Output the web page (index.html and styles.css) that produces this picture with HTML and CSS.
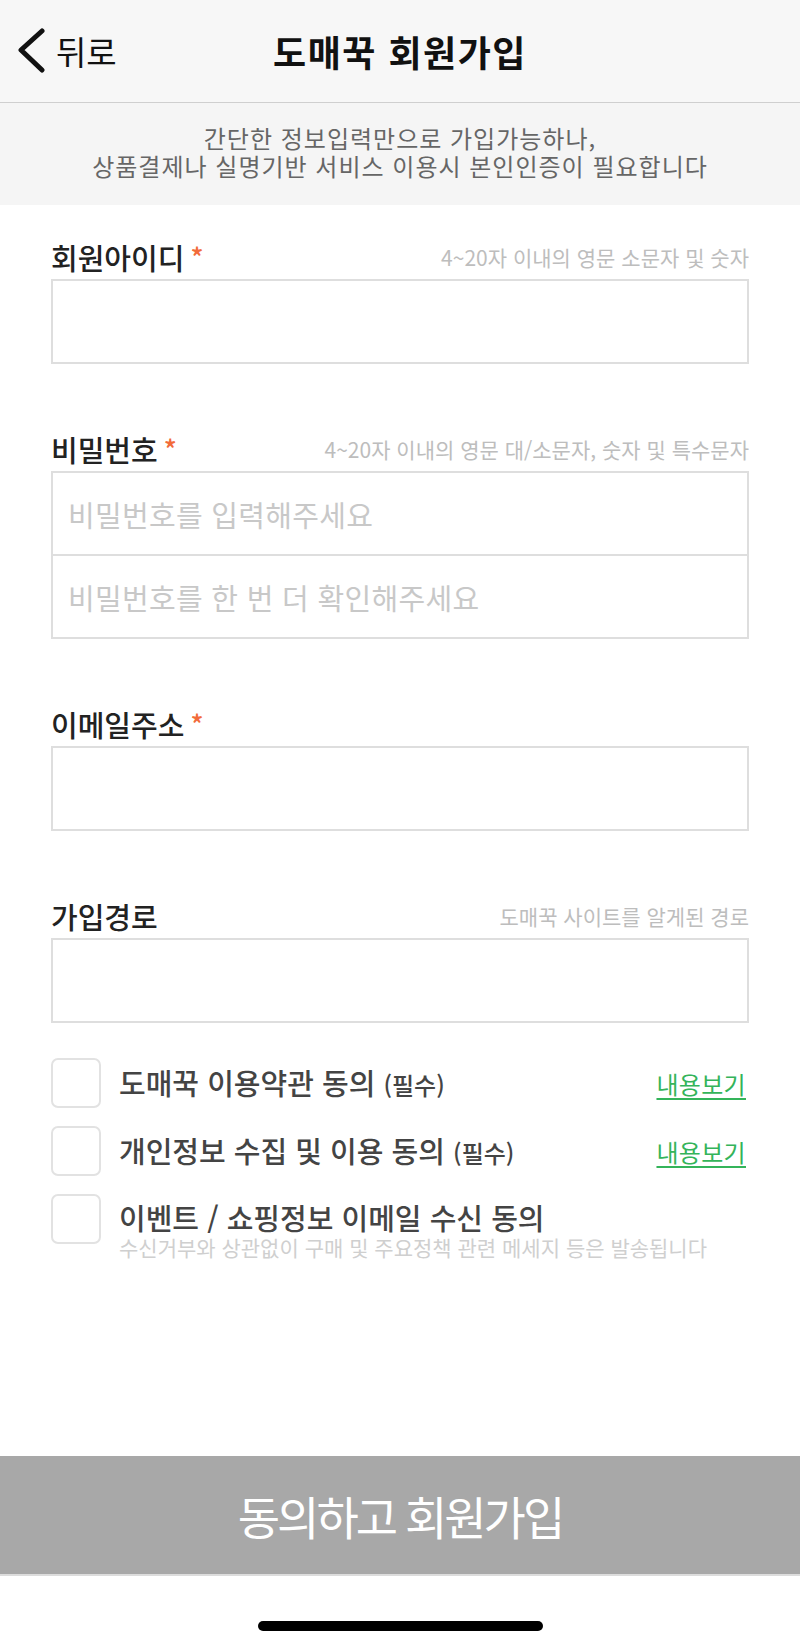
FILE: index.html
```html
<!DOCTYPE html>
<html lang="ko">
  <head>
    <meta charset="utf-8">
    <title>도매꾹 회원가입</title>
    <link rel="stylesheet" href="styles.css">
  </head>

  <body>
    <div class="page">
      <header class="topbar">
        <a class="back" href="#">
          <svg class="back-icon" width="30" height="46" viewBox="0 0 30 46">
            <polyline points="26,3 5,22 26,42" fill="none" stroke="#111" stroke-width="5" stroke-linecap="round" stroke-linejoin="round" />
          </svg>
          <span>뒤로</span>
        </a>
        <h1 class="title">도매꾹 회원가입</h1>
        <span></span>
      </header>

      <div class="notice">
        <p>간단한 정보입력만으로 가입가능하나,</p>
        <p>상품결제나 실명기반 서비스 이용시 본인인증이 필요합니다</p>
      </div>

      <form class="form">
        <div class="field">
          <div class="field-head">
            <label class="label">회원아이디<em class="req">*</em></label>
            <span class="hint">4~20자 이내의 영문 소문자 및 숫자</span>
          </div>
          <input class="input" type="text" />
        </div>

        <div class="field">
          <div class="field-head">
            <label class="label">비밀번호<em class="req">*</em></label>
            <span class="hint">4~20자 이내의 영문 대/소문자, 숫자 및 특수문자</span>
          </div>
          <input class="input" type="password" placeholder="비밀번호를 입력해주세요" />
          <input class="input input-joined" type="password" placeholder="비밀번호를 한 번 더 확인해주세요" />
        </div>

        <div class="field">
          <div class="field-head">
            <label class="label">이메일주소<em class="req">*</em></label>
          </div>
          <input class="input" type="email" />
        </div>

        <div class="field">
          <div class="field-head">
            <label class="label">가입경로</label>
            <span class="hint">도매꾹 사이트를 알게된 경로</span>
          </div>
          <input class="input" type="text" />
        </div>

        <ul class="agree-list">
          <li class="agree">
            <span class="check"></span>
            <span class="agree-text">도매꾹 이용약관 동의 <small>(필수)</small></span>
            <a class="more" href="#">내용보기</a>
          </li>
          <li class="agree">
            <span class="check"></span>
            <span class="agree-text">개인정보 수집 및 이용 동의 <small>(필수)</small></span>
            <a class="more" href="#">내용보기</a>
          </li>
          <li class="agree agree-top">
            <span class="check"></span>
            <div>
              <div class="agree-text">이벤트 / 쇼핑정보 이메일 수신 동의</div>
              <div class="agree-sub">수신거부와 상관없이 구매 및 주요정책 관련 메세지 등은 발송됩니다</div>
            </div>
          </li>
        </ul>
      </form>

      <footer class="footer">
        <button class="submit" type="button">동의하고 회원가입</button>
        <div class="home-bar"><span></span></div>
      </footer>
    </div>
  </body>
</html>
```

FILE: styles.css
```css
* {
  box-sizing: border-box;
}
body {
  margin: 0;
  font-family: "Noto Sans CJK KR", "Noto Sans", sans-serif;
  color: #222;
  background: #fff;
}
.page {
  min-height: 100vh;
  display: flex;
  flex-direction: column;
}

.topbar {
  height: 103px;
  background: #f7f7f7;
  border-bottom: 1px solid #cfcfcf;
  display: grid;
  grid-template-columns: 1fr auto 1fr;
  align-items: center;
}
.back {
  display: flex;
  align-items: center;
  gap: 10px;
  padding-left: 16px;
  color: #111;
  text-decoration: none;
  font-size: 33px;
}
.back-icon {
  display: block;
}
.title {
  margin: 0;
  font-size: 36px;
  font-weight: bold;
  color: #111;
  letter-spacing: 1.5px;
}

.notice {
  height: 102px;
  padding-top: 21px;
  background: #f5f5f5;
  text-align: center;
  font-size: 24px;
  color: #666;
  letter-spacing: 1px;
}
.notice p {
  margin: 0;
  height: 28px;
  line-height: 28px;
}

.form {
  padding: 33px 51px 0;
}
.field + .field {
  margin-top: 66px;
}
.field-head {
  height: 41px;
  padding-bottom: 4px;
  display: flex;
  justify-content: space-between;
  align-items: center;
}
.label {
  font-size: 29px;
  font-weight: 500;
  color: #222;
}
.req {
  font-style: normal;
  font-size: 27px;
  color: #f26b3a;
  margin-left: 6px;
  vertical-align: 2px;
}
.hint {
  font-size: 21px;
  color: #bdbdbd;
}
.input {
  display: block;
  width: 100%;
  height: 85px;
  margin: 0;
  border: 2px solid #dedede;
  border-radius: 0;
  padding: 0 15px;
  font-family: inherit;
  font-size: 29px;
  letter-spacing: 0.3px;
  color: #222;
  background: #fff;
  outline: none;
}
.input::placeholder {
  color: #c8c8c8;
}
.input-joined {
  margin-top: -2px;
}

.agree-list {
  list-style: none;
  margin: 35px 0 0;
  padding: 0;
}
.agree {
  display: flex;
  align-items: center;
  gap: 18px;
}
.agree + .agree {
  margin-top: 18px;
}
.agree-top {
  align-items: flex-start;
}
.check {
  flex: none;
  width: 50px;
  height: 50px;
  border: 2px solid #e2e2e2;
  border-radius: 7px;
  background: #fff;
}
.agree-text {
  font-size: 29px;
  line-height: 46px;
  font-weight: 500;
  color: #444;
}
.agree-text small {
  font-size: 24px;
}
.agree-sub {
  margin-top: -3px;
  font-size: 21px;
  line-height: 21px;
  color: #cfcfcf;
}
.more {
  margin-left: auto;
  margin-right: 3px;
  font-size: 24px;
  color: #34b45a;
  letter-spacing: 0.3px;
  text-decoration: underline;
  text-underline-offset: 4px;
}

.footer {
  margin-top: auto;
}
.submit {
  display: block;
  width: 100%;
  height: 120px;
  border: 0;
  border-bottom: 2px solid #dcdcdc;
  background: #a8a8a8;
  color: #fff;
  font-family: inherit;
  font-size: 46px;
  letter-spacing: -3px;
}
.home-bar {
  height: 72px;
  padding-top: 45px;
  display: flex;
  justify-content: center;
}
.home-bar span {
  width: 285px;
  height: 10px;
  border-radius: 5px;
  background: #000;
}
```
